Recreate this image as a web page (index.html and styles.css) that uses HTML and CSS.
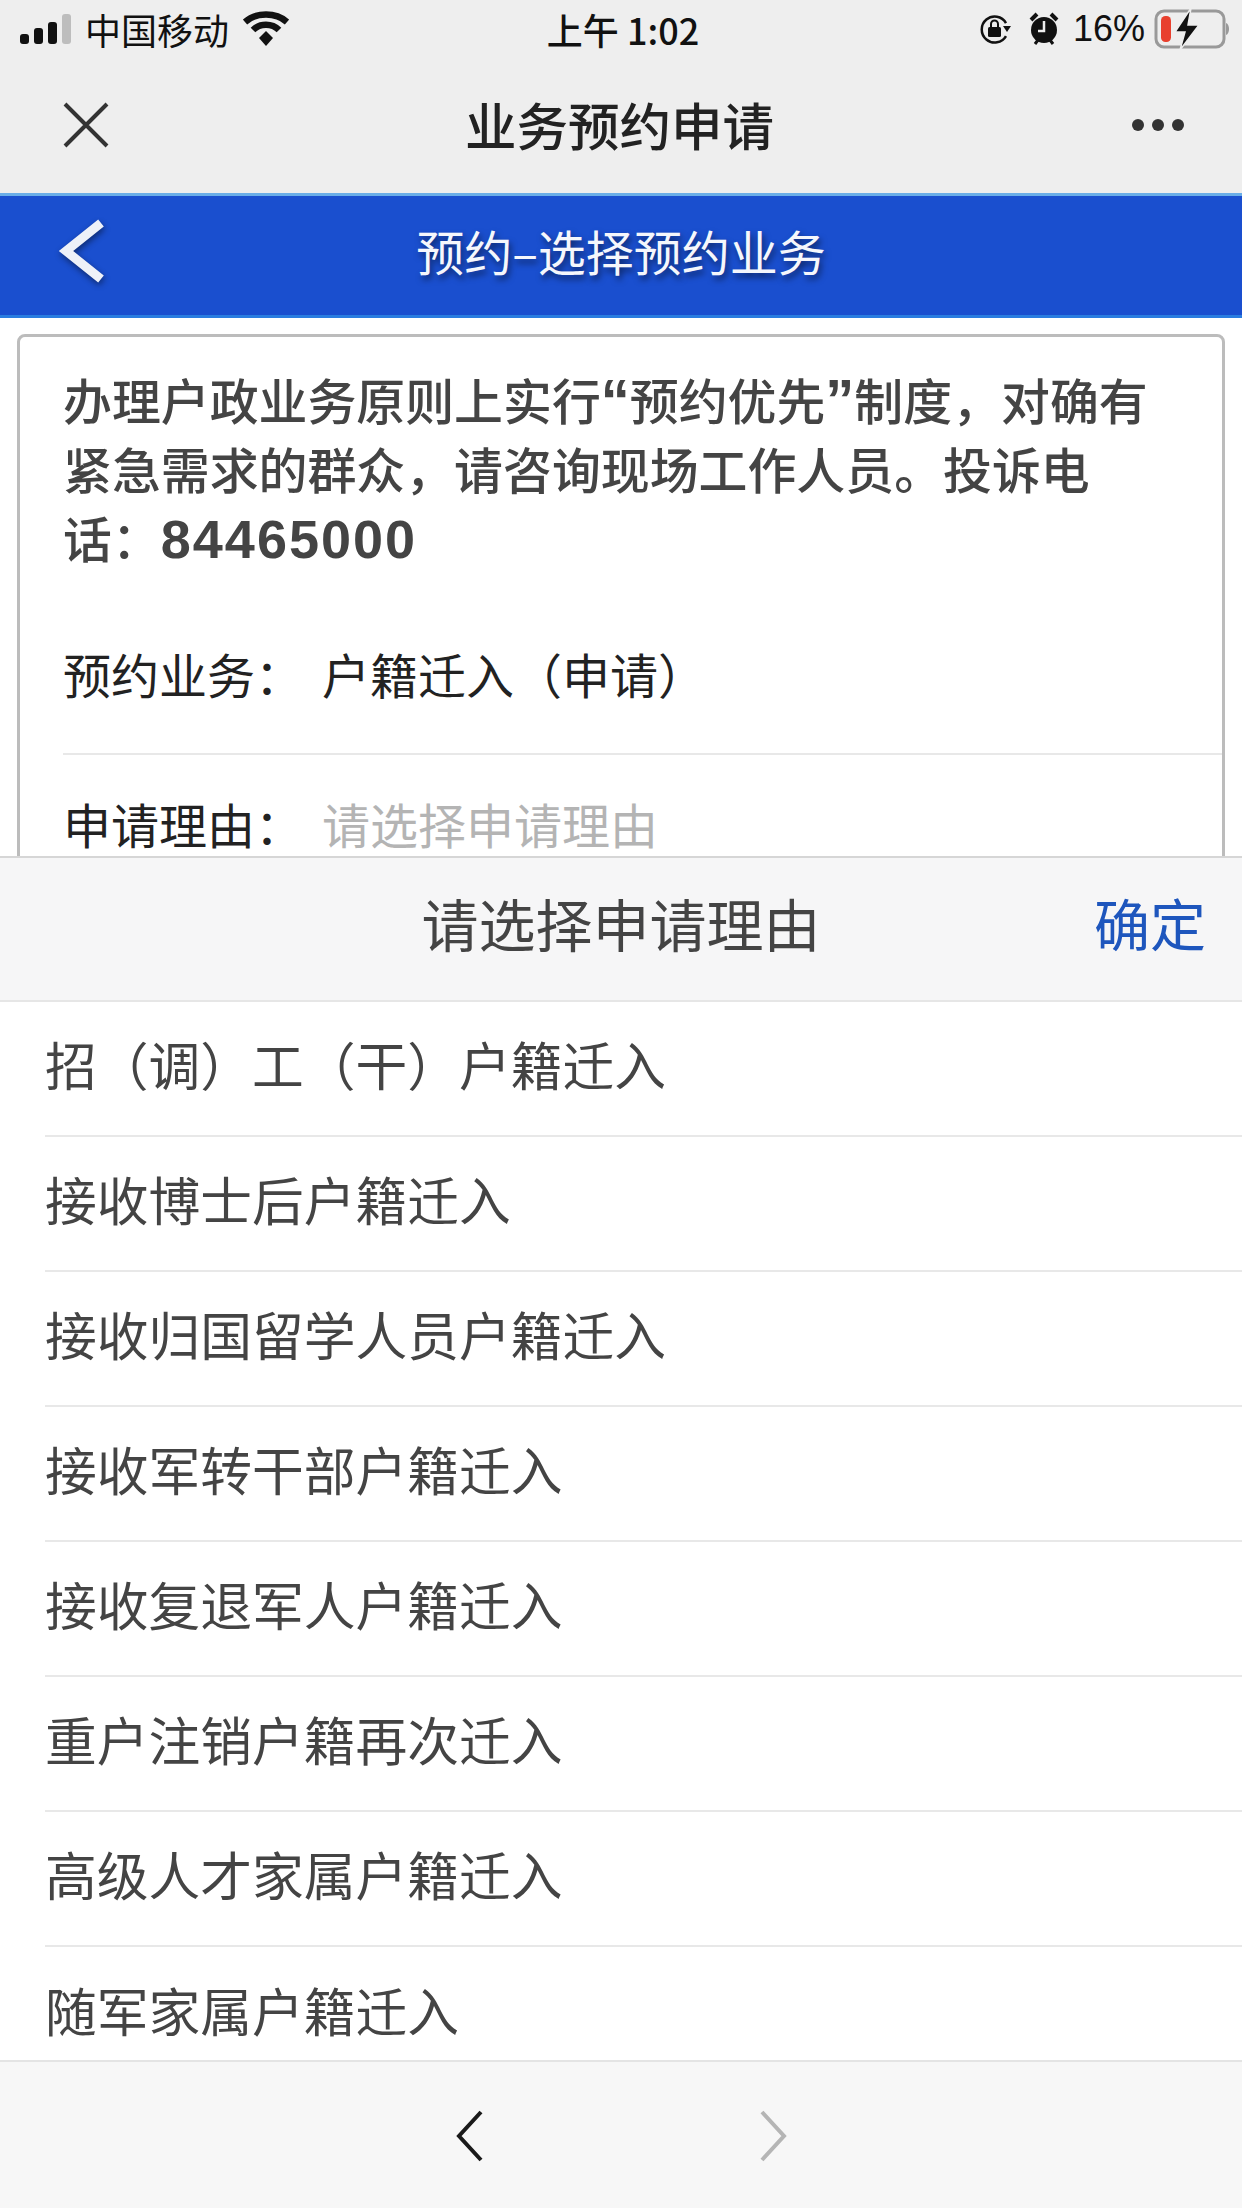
FILE: index.html
```html
<!DOCTYPE html>
<html lang="zh-CN">
<head>
    <meta charset="UTF-8">
    <meta name="viewport" content="width=device-width, initial-scale=1.0">
    <title>业务预约申请</title>
    <link rel="stylesheet" href="styles.css">
</head>
<body>
    <div class="phone">
        <div class="wechat-head">
            <div class="status-bar">
                <div class="status-left">
                    <svg class="signal" width="54" height="30" viewBox="0 0 54 30">
                        <rect x="0" y="20" width="9" height="10" rx="3" fill="#111"/>
                        <rect x="14" y="14" width="9" height="16" rx="3" fill="#111"/>
                        <rect x="28" y="8" width="9" height="22" rx="3" fill="#111"/>
                        <rect x="42" y="0" width="9" height="30" rx="3" fill="#bdbdbd"/>
                    </svg>
                    <span class="carrier">中国移动</span>
                    <svg class="wifi" width="46" height="36" viewBox="0 0 46 36">
                        <path d="M2 11 C13 1 33 1 44 11" fill="none" stroke="#111" stroke-width="6.5"/>
                        <path d="M10 19 C17 12 29 12 36 19" fill="none" stroke="#111" stroke-width="6.5"/>
                        <path d="M16 27 L23 20 L30 27 L23 35 Z" fill="#111"/>
                    </svg>
                </div>
                <span class="status-time">上午 1:02</span>
                <div class="status-right">
                    <svg class="icon-lock" width="32" height="34" viewBox="0 0 32 34">
                        <path d="M27 24 A13 13 0 1 1 27 11" fill="none" stroke="#111" stroke-width="2.5"/>
                        <path d="M24 14 L32 14 L28 20 Z" fill="#111"/>
                        <rect x="9" y="15" width="13" height="10" rx="1.5" fill="#111"/>
                        <path d="M12 16 V12 A3.5 3.5 0 0 1 19 12 V16" fill="none" stroke="#111" stroke-width="2"/>
                    </svg>
                    <svg class="icon-alarm" width="30" height="34" viewBox="0 0 30 34">
                        <circle cx="15" cy="18" r="13" fill="#111"/>
                        <path d="M2 8 L8 2 M28 8 L22 2" stroke="#111" stroke-width="4"/>
                        <path d="M6 32 L9 28 M24 32 L21 28" stroke="#111" stroke-width="3"/>
                        <path d="M15 9 V19 H9" fill="none" stroke="#eee" stroke-width="2.5"/>
                    </svg>
                    <span class="battery-pct">16%</span>
                    <svg class="icon-battery" width="76" height="42" viewBox="0 0 76 42">
                        <rect x="2" y="3" width="68" height="36" rx="8" fill="none" stroke="#999" stroke-width="3"/>
                        <rect x="7" y="8" width="10" height="26" rx="4.5" fill="#e8402e"/>
                        <path d="M72 15 C76 16 76 26 72 27 Z" fill="#999"/>
                        <path d="M37 0 L21 24 L31 24 L26 42 L45 17 L34 17 Z" fill="#111" stroke="#eee" stroke-width="1.5"/>
                    </svg>
                </div>
            </div>
            <div class="nav-bar">
                <svg class="nav-close" width="48" height="48" viewBox="0 0 48 48">
                    <path d="M3 3 L45 45 M45 3 L3 45" stroke="#333" stroke-width="4"/>
                </svg>
                <h1 class="nav-title">业务预约申请</h1>
                <div class="nav-more"><i></i><i></i><i></i></div>
            </div>
        </div>

        <div class="blue-bar">
            <svg class="blue-back" width="50" height="64" viewBox="0 0 50 64">
                <path d="M44 4 L9 32 L44 60" fill="none" stroke="#eef1f8" stroke-width="9"/>
            </svg>
            <h2 class="blue-title">预约–选择预约业务</h2>
        </div>

        <div class="form-card">
            <p class="notice">办理户政业务原则上实行<span class="quote">“</span>预约优先<span class="quote">”</span>制度，对确有紧急需求的群众，请咨询现场工作人员。投诉电话：<b>84465000</b></p>
            <div class="form-row form-row-line">
                <span class="form-label">预约业务：</span>
                <span class="form-value">户籍迁入（申请）</span>
            </div>
            <div class="form-row">
                <span class="form-label">申请理由：</span>
                <span class="form-value placeholder">请选择申请理由</span>
            </div>
        </div>

        <!-- picker lies over the form -->
        <div class="picker">
            <div class="picker-head">
                <span class="picker-title">请选择申请理由</span>
                <span class="picker-ok">确定</span>
            </div>
            <ul class="picker-list">
                <li>招（调）工（干）户籍迁入</li>
                <li>接收博士后户籍迁入</li>
                <li>接收归国留学人员户籍迁入</li>
                <li>接收军转干部户籍迁入</li>
                <li>接收复退军人户籍迁入</li>
                <li>重户注销户籍再次迁入</li>
                <li>高级人才家属户籍迁入</li>
                <li>随军家属户籍迁入</li>
            </ul>
            <div class="browser-bar">
                <svg width="28" height="52" viewBox="0 0 28 52">
                    <path d="M25 2 L3 26 L25 50" fill="none" stroke="#1a1a1a" stroke-width="4"/>
                </svg>
                <svg width="28" height="52" viewBox="0 0 28 52">
                    <path d="M3 2 L25 26 L3 50" fill="none" stroke="#b5b5b5" stroke-width="4"/>
                </svg>
            </div>
        </div>
    </div>
</body>
</html>
```

FILE: styles.css
```css
* {
    box-sizing: border-box;
}

html, body {
    margin: 0;
    padding: 0;
}

body {
    font-family: "Noto Sans CJK SC", "Liberation Sans", sans-serif;
    color: #444;
    background: #fff;
}

.phone {
    position: relative;
    width: 1242px;
    height: 2208px;
    overflow: hidden;
    background: #fff;
}

.wechat-head {
    height: 193px;
    background: #eeeeee;
}

.status-bar {
    height: 62px;
    display: grid;
    grid-template-columns: 1fr auto 1fr;
    align-items: center;
    padding: 0 12px 4px 20px;
    color: #111;
}

.status-left,
.status-right {
    display: flex;
    align-items: center;
}

.status-right {
    justify-content: flex-end;
}

.carrier {
    font-size: 36px;
    line-height: 1;
    margin-left: 11px;
}

.wifi {
    margin-left: 14px;
}

.status-time {
    font-size: 36px;
    font-weight: 500;
    line-height: 1;
    margin-right: 4px;
}

.icon-alarm {
    margin-left: 18px;
}

.battery-pct {
    font-family: "Liberation Sans", sans-serif;
    font-size: 36px;
    line-height: 1;
    margin-left: 14px;
}

.icon-battery {
    margin-left: 9px;
}

.nav-bar {
    height: 131px;
    display: grid;
    grid-template-columns: 1fr auto 1fr;
    align-items: center;
    padding: 0 58px;
    margin-top: -3px;
}

.nav-close {
    margin-left: 4px;
}

.nav-title {
    margin: 0 3px 2px 0;
    font-size: 51.5px;
    font-weight: 500;
    line-height: 1;
    color: #222;
}

.nav-more {
    display: flex;
    justify-content: flex-end;
    gap: 8px;
}

.nav-more i {
    width: 12px;
    height: 12px;
    border-radius: 50%;
    background: #333;
}

.blue-bar {
    height: 125px;
    display: flex;
    align-items: center;
    justify-content: center;
    position: relative;
    padding-bottom: 12px;
    background: #1a4fcf;
    border-top: 3px solid #6aaee8;
    border-bottom: 3px solid #2a7de0;
}

.blue-back {
    position: absolute;
    left: 57px;
    top: 23px;
    filter: drop-shadow(1px 3px 3px rgba(0, 0, 0, 0.45));
}

.blue-title {
    margin: 0;
    font-size: 48px;
    font-weight: 400;
    line-height: 1;
    color: #f5f7fc;
    text-shadow: 2px 4px 6px rgba(0, 0, 0, 0.55);
}

.form-card {
    margin: 16px 17px 0;
    padding: 27px 0 0 43px;
    border: 3px solid #bcbcbc;
    border-radius: 8px;
    background: #fff;
}

.notice {
    margin: 0 0 32px;
    padding-right: 45px;
    font-size: 48.9px;
    font-weight: 500;
    line-height: 69px;
    color: #444;
}

.quote {
    font-family: "Liberation Sans", sans-serif;
    font-size: 58px;
    font-weight: 700;
    line-height: 1;
}

.notice b {
    font-family: "Liberation Sans", sans-serif;
    font-size: 54px;
    font-weight: 700;
    letter-spacing: 2px;
    line-height: 1;
}

.form-row {
    display: flex;
    align-items: center;
    height: 136px;
    font-size: 48px;
    color: #222;
}

.form-row-line {
    height: 152px;
    padding-bottom: 10px;
    border-bottom: 2px solid #e8e8e8;
}

.form-label {
    width: 259px;
    flex-shrink: 0;
}

.placeholder {
    color: #b4b4b4;
}

.picker {
    position: absolute;
    left: 0;
    right: 0;
    bottom: 0;
    height: 1352px;
    display: flex;
    flex-direction: column;
    background: #fff;
}

.picker-head {
    height: 146px;
    flex-shrink: 0;
    display: flex;
    align-items: center;
    justify-content: center;
    position: relative;
    padding-bottom: 14px;
    background: #f6f6f7;
    border-top: 2px solid #d6d6d6;
    border-bottom: 2px solid #e6e6e6;
}

.picker-title {
    font-size: 57px;
    line-height: 1;
    color: #444;
}

.picker-ok {
    position: absolute;
    right: 36px;
    top: 36px;
    font-size: 56px;
    line-height: 1;
    color: #1e56bd;
}

.picker-list {
    flex: 1;
    margin: 0;
    padding: 0 0 0 45px;
    list-style: none;
    overflow: hidden;
}

.picker-list li {
    height: 135px;
    padding-bottom: 10px;
    display: flex;
    align-items: center;
    font-size: 51.75px;
    color: #444;
    border-bottom: 2px solid #e8e8e8;
}

.picker-list li:last-child {
    border-bottom: 0;
}

.browser-bar {
    height: 148px;
    flex-shrink: 0;
    display: flex;
    align-items: center;
    justify-content: center;
    gap: 275px;
    padding-top: 2px;
    background: #f7f7f7;
    border-top: 2px solid #e4e4e4;
}
```
